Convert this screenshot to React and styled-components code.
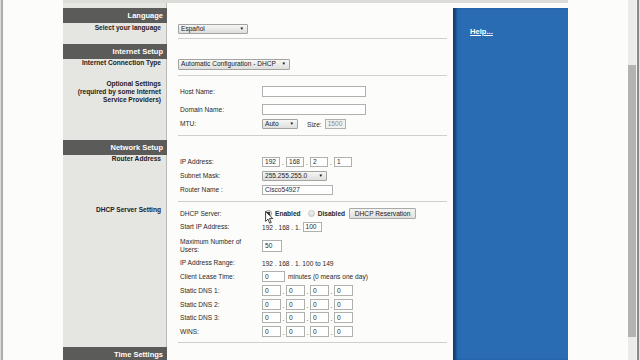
import React from 'react';
import styled, { createGlobalStyle } from 'styled-components';

const Global = createGlobalStyle`
  html, body { margin: 0; padding: 0; background: #fcfcfa; }
  body { width: 640px; height: 360px; overflow: hidden; font-family: "Liberation Sans", Arial, sans-serif; }
  #root { width: 640px; height: 360px; }
`;

const Screen = styled.div`
  display: flex;
  width: 640px;
  height: 360px;
  overflow: hidden;
  background: #fcfcfa;
  font-family: "Liberation Sans", Arial, sans-serif;
  color: #2a2a2a;
`;

const LeftEdge = styled.div`
  flex: none;
  width: 3px;
  background: linear-gradient(to right, #dcdcda 0 1px, #adadab 1px 3px);
`;

const Gutter = styled.div`
  flex: none;
  width: ${p => p.$w}px;
  background: #fcfcfa;
`;

const Page = styled.div`
  flex: none;
  width: 505px;
  height: 360px;
  box-sizing: border-box;
  border-top: 3px solid #dcdcd9;
  display: flex;
`;

const Main = styled.div`
  flex: none;
  width: 390px;
  display: flex;
  flex-direction: column;
  overflow: hidden;
`;

const Row = styled.div`
  flex: none;
  display: grid;
  grid-template-columns: 104px 286px;
  height: ${p => p.$h}px;
`;

const LeftCell = styled.div`
  box-sizing: border-box;
  background: ${p => (p.$dark ? '#5b5b59' : '#e5e5e2')};
  border-right: 1px solid ${p => (p.$dark ? '#5b5b59' : '#b9b9b6')};
  padding: ${p => p.$pt || 0}px 5px 0 0;
  text-align: right;
`;

const HeaderTitle = styled.div`
  color: #ffffff;
  font-weight: bold;
  font-size: 7.5px;
  line-height: 15px;
  margin-right: -2px;
`;

const SideLabel = styled.div`
  font-weight: bold;
  font-size: 6.6px;
  line-height: 8px;
  color: #222222;
`;

const ContentCell = styled.div`
  background: #fcfcfa;
  padding: ${p => p.$pt || 0}px 6px 0 11px;
  display: flex;
  flex-direction: column;
  align-items: flex-start;
`;

const Separator = styled.div`
  align-self: stretch;
  height: 1px;
  background: #cfcfcc;
  margin-top: ${p => p.$mt}px;
`;

const Field = styled.div`
  position: relative;
  display: grid;
  grid-template-columns: 82px auto;
  align-items: center;
  height: ${p => p.$h}px;
  margin-top: ${p => p.$mt || 0}px;
  padding-left: 2px;
  font-size: 6.6px;
`;

const FieldLabel = styled.div`
  font-size: 6.6px;
  line-height: 8px;
  color: #2a2a2a;
`;

const Controls = styled.div`
  display: flex;
  align-items: center;
  height: 100%;
`;

const SelectBox = styled.div`
  box-sizing: border-box;
  display: flex;
  align-items: center;
  justify-content: space-between;
  width: ${p => p.$w}px;
  height: ${p => p.$h || 10}px;
  border: 1px solid #a3a3a1;
  border-radius: 1px;
  background: linear-gradient(#f6f6f4, #dededc);
  padding: 0 3px 0 2px;
  font-size: 6.6px;
  line-height: 1;
  color: #222;
  white-space: nowrap;
`;

const Arrow = styled.span`
  font-size: 4.5px;
  color: #111;
`;

const TextBox = styled.div`
  box-sizing: border-box;
  width: ${p => p.$w}px;
  height: ${p => p.$h || 10}px;
  margin-left: ${p => p.$ml || 0}px;
  border: 1px solid #b0b0ae;
  background: ${p => (p.$disabled ? '#f1f1ef' : '#ffffff')};
  color: ${p => (p.$disabled ? '#8a8a88' : '#2a2a2a')};
  font-size: 6.6px;
  line-height: ${p => (p.$h || 10) - 2}px;
  padding-left: 2px;
  white-space: nowrap;
`;

const Dot = styled.span`
  width: ${p => p.$w}px;
  text-align: center;
  font-size: 6.6px;
  align-self: flex-end;
  line-height: 8px;
`;

const Plain = styled.span`
  font-size: 6.6px;
  margin-left: ${p => p.$ml || 0}px;
  white-space: nowrap;
`;

const BoldText = styled.span`
  font-size: 6.6px;
  font-weight: bold;
  margin-left: ${p => p.$ml || 0}px;
  white-space: nowrap;
`;

const Radio = styled.span`
  box-sizing: border-box;
  width: 7px;
  height: 7px;
  border-radius: 50%;
  margin-left: ${p => p.$ml || 0}px;
  border: 1px solid ${p => (p.$checked ? '#8d8d8b' : '#c4c4c2')};
  background: ${p =>
    p.$checked
      ? 'radial-gradient(circle, #3a3a3a 0 1.5px, #e8e8e6 2px)'
      : 'linear-gradient(#f2f2f0, #dcdcda)'};
`;

const Button = styled.div`
  box-sizing: border-box;
  height: 11px;
  width: 67px;
  margin-left: 4px;
  border: 1px solid #a9a9a7;
  border-radius: 1px;
  background: linear-gradient(#f4f4f2, #e0e0de);
  font-size: 6.6px;
  line-height: 9px;
  text-align: center;
  color: #222;
`;

const Cursor = styled.svg`
  position: absolute;
  left: 87px;
  top: 3px;
  width: 9px;
  height: 13px;
`;

const HelpCol = styled.div`
  flex: none;
  width: 115px;
  padding-top: 5px;
  display: flex;
  flex-direction: column;
  background: #fcfcfa;
`;

const HelpPanel = styled.div`
  flex: 1;
  background: #2a6cb4;
  box-shadow: inset 4px 0 3px -1px #123d72;
  padding: 19px 0 0 17px;
  font-size: 7.6px;
  line-height: 9px;
`;

const HelpLink = styled.a`
  color: #ffffff;
  font-weight: bold;
  font-size: 7.6px;
  line-height: 9px;
  text-decoration: underline;
`;

const Scrollbar = styled.div`
  flex: none;
  width: 12px;
  height: 360px;
  display: flex;
`;

const Track = styled.div`
  width: 8px;
  background: #ececea;
  border-right: 1px solid #f6f6f4;
  position: relative;
`;

const Thumb = styled.div`
  position: absolute;
  left: 0;
  right: 0;
  top: 65px;
  height: 272px;
  background: #b3b3b1;
`;

const TrackEdge = styled.div`
  width: 2px;
  background: #8a8a88;
`;

const TrackOuter = styled.div`
  width: 1px;
  background: #e2e2e0;
`;

const Header = ({ title }) => (
  <Row $h={15}>
    <LeftCell $dark>
      <HeaderTitle>{title}</HeaderTitle>
    </LeftCell>
    <ContentCell />
  </Row>
);

const Octets = ({ values, w, gap, h }) => (
  <Controls>
    {values.map((v, i) => (
      <React.Fragment key={i}>
        {i > 0 && <Dot $w={gap}>.</Dot>}
        <TextBox $w={w} $h={h}>{v}</TextBox>
      </React.Fragment>
    ))}
  </Controls>
);

export default function App() {
  return (
    <Screen>
      <Global />
      <LeftEdge />
      <Gutter $w={60} />
      <Page>
        <Main>
          <Row $h={5}>
            <LeftCell />
            <ContentCell />
          </Row>

          <Header title="Language" />
          <Row $h={21}>
            <LeftCell $pt={1}>
              <SideLabel>Select your language</SideLabel>
            </LeftCell>
            <ContentCell $pt={1}>
              <SelectBox $w={70}>
                Español <Arrow>▼</Arrow>
              </SelectBox>
              <Separator $mt={4} />
            </ContentCell>
          </Row>

          <Header title="Internet Setup" />
          <Row $h={17}>
            <LeftCell $pt={0}>
              <SideLabel>Internet Connection Type</SideLabel>
            </LeftCell>
            <ContentCell>
              <SelectBox $w={112} $h={11}>
                Automatic Configuration - DHCP <Arrow>▼</Arrow>
              </SelectBox>
              <Separator $mt={5} />
            </ContentCell>
          </Row>
          <Row $h={64}>
            <LeftCell $pt={4}>
              <SideLabel>
                Optional Settings
                <br />
                (required by some Internet
                <br />
                Service Providers)
              </SideLabel>
            </LeftCell>
            <ContentCell $pt={10}>
              <Field $h={11}>
                <FieldLabel>Host Name:</FieldLabel>
                <TextBox $w={104} $h={11} />
              </Field>
              <Field $h={11} $mt={7}>
                <FieldLabel>Domain Name:</FieldLabel>
                <TextBox $w={104} $h={11} />
              </Field>
              <Field $h={10} $mt={4}>
                <FieldLabel>MTU:</FieldLabel>
                <Controls>
                  <SelectBox $w={36}>
                    Auto <Arrow>▼</Arrow>
                  </SelectBox>
                  <Plain $ml={9}>Size:</Plain>
                  <TextBox $w={21} $ml={3} $disabled>1500</TextBox>
                </Controls>
              </Field>
              <Separator $mt={6} />
            </ContentCell>
          </Row>

          <Header title="Network Setup" />
          <Row $h={47}>
            <LeftCell $pt={0}>
              <SideLabel>Router Address</SideLabel>
            </LeftCell>
            <ContentCell $pt={2}>
              <Field $h={10}>
                <FieldLabel>IP Address:</FieldLabel>
                <Octets values={['192', '168', '2', '1']} w={18} gap={6} h={10} />
              </Field>
              <Field $h={10} $mt={4}>
                <FieldLabel>Subnet Mask:</FieldLabel>
                <SelectBox $w={65}>
                  255.255.255.0 <Arrow>▼</Arrow>
                </SelectBox>
              </Field>
              <Field $h={10} $mt={4}>
                <FieldLabel>Router Name :</FieldLabel>
                <TextBox $w={71}>Cisco54927</TextBox>
              </Field>
              <Separator $mt={6} />
            </ContentCell>
          </Row>

          <Row $h={145}>
            <LeftCell $pt={4}>
              <SideLabel>DHCP Server Setting</SideLabel>
            </LeftCell>
            <ContentCell $pt={6}>
              <Field $h={11}>
                <FieldLabel>DHCP Server:</FieldLabel>
                <Controls>
                  <Radio $ml={3} $checked />
                  <BoldText $ml={3}>Enabled</BoldText>
                  <Radio $ml={7} />
                  <BoldText $ml={3}>Disabled</BoldText>
                  <Button>DHCP Reservation</Button>
                </Controls>
                <Cursor viewBox="0 0 10 15">
                  <path
                    d="M0.5 0.5 L0.5 12 L3.2 9.4 L5.2 14 L7 13.2 L5 8.7 L8.8 8.7 Z"
                    fill="#ffffff"
                    stroke="#111111"
                    strokeWidth="0.9"
                    strokeLinejoin="round"
                  />
                </Cursor>
              </Field>
              <Field $h={10} $mt={3}>
                <FieldLabel>Start IP Address:</FieldLabel>
                <Controls>
                  <Plain>192 . 168 . 1.</Plain>
                  <TextBox $w={19} $ml={2}>100</TextBox>
                </Controls>
              </Field>
              <Field $h={12} $mt={6}>
                <FieldLabel>
                  Maximum Number of
                  <br />
                  Users:
                </FieldLabel>
                <TextBox $w={20} $h={12}>50</TextBox>
              </Field>
              <Field $h={10} $mt={8}>
                <FieldLabel>IP Address Range:</FieldLabel>
                <Plain>192 . 168 . 1. 100 to 149</Plain>
              </Field>
              <Field $h={11} $mt={3}>
                <FieldLabel>Client Lease Time:</FieldLabel>
                <Controls>
                  <TextBox $w={23} $h={11}>0</TextBox>
                  <Plain $ml={3}>minutes (0 means one day)</Plain>
                </Controls>
              </Field>
              <Field $h={11} $mt={3}>
                <FieldLabel>Static DNS 1:</FieldLabel>
                <Octets values={['0', '0', '0', '0']} w={19} gap={5} h={11} />
              </Field>
              <Field $h={11} $mt={3}>
                <FieldLabel>Static DNS 2:</FieldLabel>
                <Octets values={['0', '0', '0', '0']} w={19} gap={5} h={11} />
              </Field>
              <Field $h={11} $mt={2}>
                <FieldLabel>Static DNS 3:</FieldLabel>
                <Octets values={['0', '0', '0', '0']} w={19} gap={5} h={11} />
              </Field>
              <Field $h={11} $mt={3}>
                <FieldLabel>WINS:</FieldLabel>
                <Octets values={['0', '0', '0', '0']} w={19} gap={5} h={11} />
              </Field>
              <Separator $mt={5} />
            </ContentCell>
          </Row>

          <Header title="Time Settings" />
        </Main>
        <HelpCol>
          <HelpPanel>
            <HelpLink>Help...</HelpLink>
          </HelpPanel>
        </HelpCol>
      </Page>
      <Gutter $w={60} />
      <Scrollbar>
        <Track>
          <Thumb />
        </Track>
        <TrackEdge />
        <TrackOuter />
      </Scrollbar>
    </Screen>
  );
}
